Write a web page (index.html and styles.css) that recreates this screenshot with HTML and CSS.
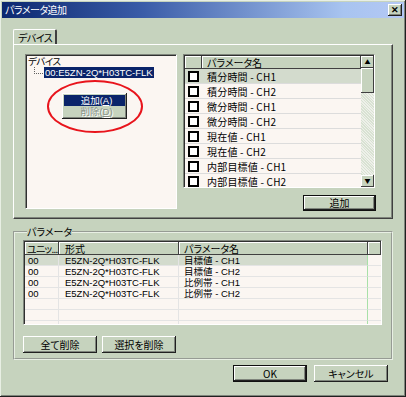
FILE: index.html
```html
<html>
    <head>
        <meta charset="UTF-8">
        <link rel="stylesheet" href="styles.css">
    </head>
    <body>
        <div class="dialog">
            <div class="titlebar">
                <span class="title">パラメータ追加</span>
                <span class="close">✕</span>
            </div>

            <div class="content">
                <div class="tabs">
                    <div class="tab">デバイス</div>
                </div>

                <div class="panel">
                    <div class="tree">
                        <div class="tree-root">デバイス</div>
                        <div class="tree-item">
                            <span class="branch"></span>
                            <span class="node">00:E5ZN-2Q*H03TC-FLK</span>
                        </div>
                    </div>

                    <div class="right">
                        <div class="plist">
                            <div class="plist-body">
                                <div class="plist-head">
                                    <div class="hcell chkcol"></div>
                                    <div class="hcell namecol">パラメータ名</div>
                                </div>
                                <div class="prow sel"><span class="chk"></span><span class="pname">積分時間 - CH1</span></div>
                                <div class="prow"><span class="chk"></span><span class="pname">積分時間 - CH2</span></div>
                                <div class="prow"><span class="chk"></span><span class="pname">微分時間 - CH1</span></div>
                                <div class="prow"><span class="chk"></span><span class="pname">微分時間 - CH2</span></div>
                                <div class="prow"><span class="chk"></span><span class="pname">現在値 - CH1</span></div>
                                <div class="prow"><span class="chk"></span><span class="pname">現在値 - CH2</span></div>
                                <div class="prow"><span class="chk"></span><span class="pname">内部目標値 - CH1</span></div>
                                <div class="prow"><span class="chk"></span><span class="pname">内部目標値 - CH2</span></div>
                                <div class="prow"><span class="chk"></span><span class="pname"></span></div>
                            </div>
                            <div class="vscroll">
                                <div class="sbtn">▲</div>
                                <div class="thumb"></div>
                                <div class="track"></div>
                                <div class="sbtn">▼</div>
                            </div>
                        </div>
                        <div class="btn-row">
                            <button class="btn default add">追加</button>
                        </div>
                    </div>
                </div>

                <fieldset class="group">
                    <legend>パラメータ</legend>
                    <div class="table">
                        <div class="thead">
                            <div class="th c1">ユニッ...</div>
                            <div class="th c2">形式</div>
                            <div class="th c3">パラメータ名</div>
                            <div class="th c4"></div>
                        </div>
                        <div class="tr sel"><div class="td c1">00</div><div class="td c2">E5ZN-2Q*H03TC-FLK</div><div class="td c3">目標値 - CH1</div><div class="td c4"></div></div>
                        <div class="tr"><div class="td c1">00</div><div class="td c2">E5ZN-2Q*H03TC-FLK</div><div class="td c3">目標値 - CH2</div><div class="td c4"></div></div>
                        <div class="tr"><div class="td c1">00</div><div class="td c2">E5ZN-2Q*H03TC-FLK</div><div class="td c3">比例帯 - CH1</div><div class="td c4"></div></div>
                        <div class="tr"><div class="td c1">00</div><div class="td c2">E5ZN-2Q*H03TC-FLK</div><div class="td c3">比例帯 - CH2</div><div class="td c4"></div></div>
                        <div class="tr"><div class="td c1"></div><div class="td c2"></div><div class="td c3"></div><div class="td c4"></div></div>
                        <div class="tr"><div class="td c1"></div><div class="td c2"></div><div class="td c3"></div><div class="td c4"></div></div>
                        <div class="tr"><div class="td c1"></div><div class="td c2"></div><div class="td c3"></div><div class="td c4"></div></div>
                    </div>
                    <div class="group-buttons">
                        <button class="btn">全て削除</button>
                        <button class="btn">選択を削除</button>
                    </div>
                </fieldset>

                <div class="footer">
                    <button class="btn default">OK</button>
                    <button class="btn">キャンセル</button>
                </div>
            </div>

            <!-- context menu and the red mark drawn over the tree -->
            <div class="ring"></div>
            <div class="menu">
                <div class="menu-item active">追加(<u>A</u>)</div>
                <div class="menu-item disabled">削除(<u>D</u>)</div>
            </div>
        </div>
    </body>
</html>
```

FILE: styles.css
```css
html, body {
    margin: 0;
    padding: 0;
    background: #c6d3be;
}

body {
    font-family: "Noto Sans CJK JP", sans-serif;
    font-size: 10px;
    font-feature-settings: "palt";
    color: #000;
}

.dialog {
    position: relative;
    width: 406px;
    height: 397px;
    box-sizing: border-box;
    padding: 2px;
    background: #c6d3be;
    box-shadow: inset -1px -1px 0 #202020, inset 1px 1px 0 #e8efe4, inset -2px -2px 0 #7f857c;
    overflow: hidden;
}

.titlebar {
    height: 16px;
    display: flex;
    align-items: center;
    justify-content: space-between;
    padding: 0 2px 0 3px;
    background: linear-gradient(to right, #0c2870, #3a5ca8 35%, #a8c4f0 85%, #b4c8f4);
}

.title {
    color: white;
    font-size: 10px;
    line-height: 16px;
    letter-spacing: -0.5px;
}

.close {
    width: 14px;
    height: 12px;
    box-sizing: border-box;
    background: #c6d3be;
    box-shadow: inset -1px -1px 0 #202020, inset 1px 1px 0 #ffffff, inset -2px -2px 0 #7f857c;
    font-size: 9px;
    line-height: 12px;
    text-align: center;
    font-weight: bold;
}

.content {
    padding: 11px 11px 0 11px;
}

/* tab strip */
.tabs {
    display: flex;
    height: 15px;
}

.tab {
    width: 44px;
    box-sizing: border-box;
    padding-left: 4px;
    line-height: 15px;
    white-space: nowrap;
    letter-spacing: -0.5px;
    border-top: 1px solid #ffffff;
    border-left: 1px solid #ffffff;
    border-right: 2px solid #404040;
    border-radius: 2px 2px 0 0;
}

.panel {
    height: 175px;
    box-sizing: border-box;
    display: flex;
    gap: 6px;
    padding: 9px 15px 0 11px;
    border-top: 1px solid #ffffff;
    border-left: 1px solid #ffffff;
    border-right: 1px solid #404040;
    border-bottom: 1px solid #404040;
    box-shadow: inset -1px -1px 0 #7f857c;
}

/* sunken white field */
.tree, .plist, .table {
    background: #fbf6f2;
    box-sizing: border-box;
    border-top: 1px solid #7f857c;
    border-left: 1px solid #7f857c;
    border-right: 1px solid #ffffff;
    border-bottom: 1px solid #ffffff;
    box-shadow: inset 1px 1px 0 #303030;
}

.tree {
    width: 152px;
    height: 155px;
    padding: 1px 0 0 2px;
}

.tree-root {
    line-height: 11px;
    letter-spacing: -0.5px;
}

.tree-item {
    display: flex;
    align-items: flex-start;
    height: 12px;
}

.branch {
    width: 8px;
    height: 6px;
    margin-left: 6px;
    margin-right: 1px;
    border-left: 1px dotted #606060;
    border-bottom: 1px dotted #606060;
}

.node {
    background: #0a246a;
    color: white;
    line-height: 11px;
    padding: 0 1px;
}

.right {
    display: flex;
    flex-direction: column;
    gap: 7px;
}

.plist {
    width: 192px;
    height: 134px;
    display: flex;
    overflow: hidden;
    padding: 1px 0 0 1px;
}

.plist-body {
    flex: 1;
    overflow: hidden;
}

.plist-head {
    display: flex;
    height: 13px;
}

.hcell {
    box-sizing: border-box;
    line-height: 13px;
    box-shadow: inset -1px -1px 0 #404040, inset 1px 1px 0 #ffffff;
    background: #c6d3be;
}

.chkcol {
    width: 17px;
}

.namecol {
    flex: 1;
    padding-left: 5px;
}

.prow {
    display: flex;
    align-items: center;
    height: 15px;
    box-sizing: border-box;
    border-bottom: 1px solid #dcdcdc;
}

.prow.sel {
    background: #d3dbcd;
}

.chk {
    width: 11px;
    height: 11px;
    box-sizing: border-box;
    margin: 0 8px 0 3px;
    border: 2px solid #000;
    background: #fff;
}

.pname {
    font-size: 10px;
    letter-spacing: 0.2px;
}

.vscroll {
    width: 13px;
    display: flex;
    flex-direction: column;
    background: repeating-linear-gradient(45deg, #eef0ea 0 1px, #d8e2d2 1px 2px);
}

.sbtn {
    height: 12px;
    box-sizing: border-box;
    background: #c6d3be;
    box-shadow: inset -1px -1px 0 #404040, inset 1px 1px 0 #ffffff;
    font-size: 6px;
    line-height: 12px;
    text-align: center;
}

.thumb {
    height: 25px;
    background: #c6d3be;
    box-shadow: inset -1px -1px 0 #404040, inset 1px 1px 0 #ffffff;
}

.track {
    flex: 1;
}

.btn-row {
    display: flex;
    justify-content: flex-end;
}

.btn {
    font-family: "Noto Sans CJK JP", sans-serif;
    font-size: 10px;
    font-feature-settings: "palt";
    width: 74px;
    height: 17px;
    padding: 0;
    line-height: 17px;
    border: none;
    background: #c6d3be;
    box-shadow: inset -1px -1px 0 #202020, inset 1px 1px 0 #ffffff, inset -2px -2px 0 #7f857c;
    color: #000;
}

.btn.default {
    box-shadow: inset 0 0 0 1px #101010, inset -2px -2px 0 #202020, inset 2px 2px 0 #ffffff, inset -3px -3px 0 #7f857c;
}

.add {
    width: 73px;
    height: 16px;
    line-height: 16px;
    margin-right: -1px;
}

/* group box */
.group {
    margin: 7px 0 0 0;
    padding: 2px 8px 5px 8px;
    height: 134px;
    box-sizing: border-box;
    border: 2px groove #e8efe4;
}

.group legend {
    padding: 0;
    margin-left: 4px;
    line-height: 12px;
}

.table {
    width: 359px;
    height: 85px;
    overflow: hidden;
    padding: 1px 0 0 1px;
}

.thead {
    display: flex;
    height: 13px;
}

.th {
    box-sizing: border-box;
    line-height: 13px;
    padding-left: 3px;
    background: #c6d3be;
    box-shadow: inset -1px -1px 0 #404040, inset 1px 1px 0 #ffffff;
    white-space: nowrap;
}

.th.c1 {
    padding-left: 2px;
    letter-spacing: -0.8px;
}

.c1 { width: 34px; }
.c2 { width: 120px; padding-left: 6px; }
.c3 { width: 189px; padding-left: 5px; }
.c4 { flex: 1; }

.tr {
    display: flex;
    height: 11px;
}

/* Liberation Sans keeps the glyph box inside the short rows */
.td, .menu-item, .tree-root, .node {
    font-family: "Liberation Sans", "Noto Sans CJK JP", sans-serif;
    font-size: 9.5px;
}

.td {
    box-sizing: border-box;
    line-height: 11px;
    padding-left: 3px;
    border-bottom: 1px solid #e4e4e4;
    border-right: 1px solid #e4e4e4;
    white-space: nowrap;
}

.td.c2 { padding-left: 6px; }
.td.c3 { padding-left: 5px; border-right-color: #a8e0a8; }
.td.c4 { border-right: none; }

.tr.sel .c1, .tr.sel .c2, .tr.sel .c3 {
    background: #d3dbcd;
}

.group-buttons {
    display: flex;
    gap: 5px;
    margin-top: 11px;
}

.footer {
    display: flex;
    justify-content: flex-end;
    gap: 7px;
    margin-top: 5px;
    padding-right: 5px;
}

/* overlays */
.ring {
    position: absolute;
    left: 47px;
    top: 80px;
    width: 96px;
    height: 53px;
    box-sizing: border-box;
    border: 2px solid #e8141c;
    border-radius: 50%;
}

.menu {
    position: absolute;
    left: 62px;
    top: 93px;
    width: 65px;
    height: 26px;
    box-sizing: border-box;
    padding: 2px;
    background: #c6d3be;
    box-shadow: inset -1px -1px 0 #202020, inset 1px 1px 0 #ffffff, inset -2px -2px 0 #7f857c;
}

.menu-item {
    height: 11px;
    line-height: 11px;
    text-align: center;
    padding-left: 4px;
}

.menu-item.active {
    background: #0a246a;
    color: white;
}

.menu-item.disabled {
    color: #8a9288;
    text-shadow: 1px 1px 0 #ffffff;
}
```
